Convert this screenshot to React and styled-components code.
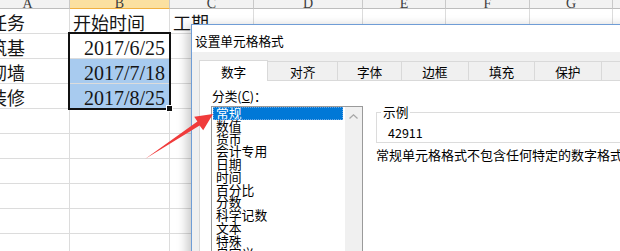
import React from 'react';
import styled, { createGlobalStyle } from 'styled-components';

const Global = createGlobalStyle`
  html, body { margin: 0; padding: 0; background: #fff; }
  body { width: 620px; height: 251px; overflow: hidden; }
`;

const Page = styled.div`
  position: relative;
  width: 620px;
  height: 251px;
  overflow: hidden;
  background: #fff;
`;

const Sheet = styled.div`
  position: relative;
  margin-left: -14px;
  display: grid;
  grid-template-columns: 84px 100px 84px 109px 83px 84px 83px 80px;
  grid-template-rows: 9px;
  grid-auto-rows: 25px;
`;

const HeaderCell = styled.div`
  box-sizing: border-box;
  overflow: hidden;
  display: flex;
  justify-content: center;
  align-items: flex-end;
  background: ${p => (p.$active ? '#fbe0a0' : '#f2f2f2')};
  border-right: 1px solid #c9c9c9;
  border-bottom: 1px solid ${p => (p.$active ? '#f0b040' : '#bdbdbd')};
  font-family: "Liberation Serif", serif;
  font-size: 14px;
  line-height: 14px;
  color: #3c3c3c;
  span { margin-bottom: -3px; }
`;

const Cell = styled.div`
  box-sizing: border-box;
  overflow: hidden;
  white-space: nowrap;
  display: flex;
  align-items: flex-end;
  justify-content: ${p => (p.$num ? 'flex-end' : 'flex-start')};
  padding: 0 4px 0 3px;
  background: ${p => (p.$sel ? '#a8cbef' : '#fff')};
  border-right: 1px solid #dcdcdc;
  border-bottom: 1px solid #dcdcdc;
  color: #151515;
  font-family: ${p => (p.$num ? '"Liberation Serif", serif' : '"Noto Sans CJK SC", sans-serif')};
  font-size: ${p => (p.$num ? '20px' : '18px')};
  line-height: ${p => (p.$num ? '20px' : '22px')};
`;

const SelectionBox = styled.div`
  position: absolute;
  left: 82px;
  top: 32px;
  width: 103px;
  height: 78px;
  box-sizing: border-box;
  border: 2px solid #111;
  pointer-events: none;
  &::after {
    content: '';
    position: absolute;
    right: -4px;
    bottom: -4px;
    width: 5px;
    height: 5px;
    background: #111;
    border: 1px solid #fff;
  }
`;

const Dialog = styled.div`
  position: absolute;
  left: 191px;
  top: 24px;
  width: 470px;
  height: 270px;
  box-sizing: border-box;
  border: 1px solid #6f9dd6;
  background: #f0f0f0;
  box-shadow: -4px 2px 10px rgba(0, 0, 0, 0.22);
  display: flex;
  flex-direction: column;
  font-family: "Noto Sans CJK SC", sans-serif;
  font-size: 12.7px;
  color: #000;
`;

const TitleBar = styled.div`
  height: 27px;
  box-sizing: border-box;
  background: #fff;
  display: flex;
  align-items: center;
  padding: 3px 0 0 3px;
`;

const Body = styled.div`
  flex: 1;
  display: flex;
  flex-direction: column;
  padding: 8px 0 0 7px;
`;

const Tabs = styled.div`
  position: relative;
  z-index: 1;
  display: flex;
  align-items: flex-start;
  height: 21px;
  margin-bottom: -1px;
`;

const Tab = styled.div`
  box-sizing: border-box;
  width: ${p => p.$w}px;
  height: ${p => (p.$active ? 21 : 19)}px;
  margin-top: ${p => (p.$active ? 0 : 1)}px;
  display: flex;
  align-items: center;
  justify-content: center;
  background: ${p => (p.$active ? '#fff' : '#f0f0f0')};
  border: 1px solid #d9d9d9;
  border-bottom: none;
  border-left: ${p => (p.$first ? '1px solid #d9d9d9' : 'none')};
`;

const Panel = styled.div`
  flex: 1;
  background: #fff;
  border: 1px solid #d9d9d9;
  display: flex;
  gap: 13px;
  padding: 7px 0 0 11px;
`;

const LeftCol = styled.div`
  width: 152px;
  flex-shrink: 0;
  display: flex;
  flex-direction: column;
`;

const Label = styled.div`
  height: 16px;
  line-height: 16px;
  padding-left: 1px;
  margin-bottom: 2px;
  u { text-decoration: underline; }
`;

const ListBox = styled.div`
  display: flex;
  height: 160px;
  box-sizing: border-box;
  border: 1px solid #9a9a9a;
  background: #fff;
`;

const Items = styled.div`
  flex: 1;
  padding: 0 2px 0 1px;
  overflow: hidden;
`;

const Item = styled.div`
  height: 12.75px;
  line-height: 12.75px;
  padding-left: 3px;
  font-size: 12.8px;
  white-space: nowrap;
  background: ${p => (p.$sel ? '#0078d7' : 'transparent')};
  color: ${p => (p.$sel ? '#fff' : '#000')};
  outline: ${p => (p.$sel ? '1px dotted #6aa8e6' : 'none')};
  outline-offset: -1px;
`;

const ScrollBar = styled.div`
  width: 17px;
  background: #f0f0f0;
  display: flex;
  justify-content: center;
  padding-top: 7px;
  box-sizing: border-box;
`;

const RightCol = styled.div`
  flex: 1;
  display: flex;
  flex-direction: column;
`;

const Group = styled.fieldset`
  margin: 17px 0 0;
  padding: 5px 0 1px;
  border: 1px solid #dcdcdc;
  min-width: 0;
  width: 300px;
`;

const Legend = styled.legend`
  margin-left: 4px;
  padding: 0 2px;
  line-height: 14px;
  font-size: 12.7px;
`;

const Value = styled.div`
  height: 17px;
  line-height: 17px;
  padding-left: 11px;
  font-size: 12.5px;
`;

const Desc = styled.div`
  margin-top: 4px;
  line-height: 16px;
  font-size: 13px;
  white-space: nowrap;
`;

const ArrowLayer = styled.svg`
  position: absolute;
  left: 0;
  top: 0;
  width: 620px;
  height: 251px;
  pointer-events: none;
  z-index: 5;
`;

const cols = ['A', 'B', 'C', 'D', 'E', 'F', 'G', 'H'];
const rows = [
  [{ t: '任务' }, { t: '开始时间' }, { t: '工期' }],
  [{ t: '筑基' }, { t: '2017/6/25', num: true }],
  [{ t: '砌墙' }, { t: '2017/7/18', num: true, sel: true }],
  [{ t: '装修' }, { t: '2017/8/25', num: true, sel: true }],
  [], [], [], [], [], [],
];

const tabs = [
  { l: '数字', w: 71 },
  { l: '对齐', w: 72 },
  { l: '字体', w: 65 },
  { l: '边框', w: 69 },
  { l: '填充', w: 68 },
  { l: '保护', w: 68 },
  { l: '', w: 60 },
];

const cats = ['常规', '数值', '货币', '会计专用', '日期', '时间', '百分比', '分数', '科学记数', '文本', '特殊', '自定义'];

export default function App() {
  return (
    <Page>
      <Global />
      <Sheet>
        {cols.map(c => (
          <HeaderCell key={c} $active={c === 'B'}><span>{c}</span></HeaderCell>
        ))}
        {rows.map((r, ri) =>
          cols.map((c, ci) => {
            const d = r[ci];
            return (
              <Cell key={`${ri}-${c}`} $num={d && d.num} $sel={d && d.sel}>
                {d ? d.t : ''}
              </Cell>
            );
          })
        )}
        <SelectionBox />
      </Sheet>

      <Dialog>
        <TitleBar>设置单元格格式</TitleBar>
        <Body>
          <Tabs>
            {tabs.map((t, i) => (
              <Tab key={i} $w={t.w} $active={i === 0} $first={i === 0}>{t.l}</Tab>
            ))}
          </Tabs>
          <Panel>
            <LeftCol>
              <Label>分类(<u>C</u>)：</Label>
              <ListBox>
                <Items>
                  {cats.map((c, i) => (
                    <Item key={c} $sel={i === 0}>{c}</Item>
                  ))}
                </Items>
                <ScrollBar>
                  <svg width="9" height="5" viewBox="0 0 9 5">
                    <polyline points="0.5,4.5 4.5,0.8 8.5,4.5" fill="none" stroke="#a6a6a6" strokeWidth="1.2" />
                  </svg>
                </ScrollBar>
              </ListBox>
            </LeftCol>
            <RightCol>
              <Group>
                <Legend>示例</Legend>
                <Value>42911</Value>
              </Group>
              <Desc>常规单元格格式不包含任何特定的数字格式。</Desc>
            </RightCol>
          </Panel>
        </Body>
      </Dialog>

      <ArrowLayer viewBox="0 0 620 251">
        <polygon
          points="145,159 199.6,125.6 203.2,130.2 213,114 194.2,116.8 197.4,121.6"
          fill="#f03b3b"
        />
      </ArrowLayer>
    </Page>
  );
}
